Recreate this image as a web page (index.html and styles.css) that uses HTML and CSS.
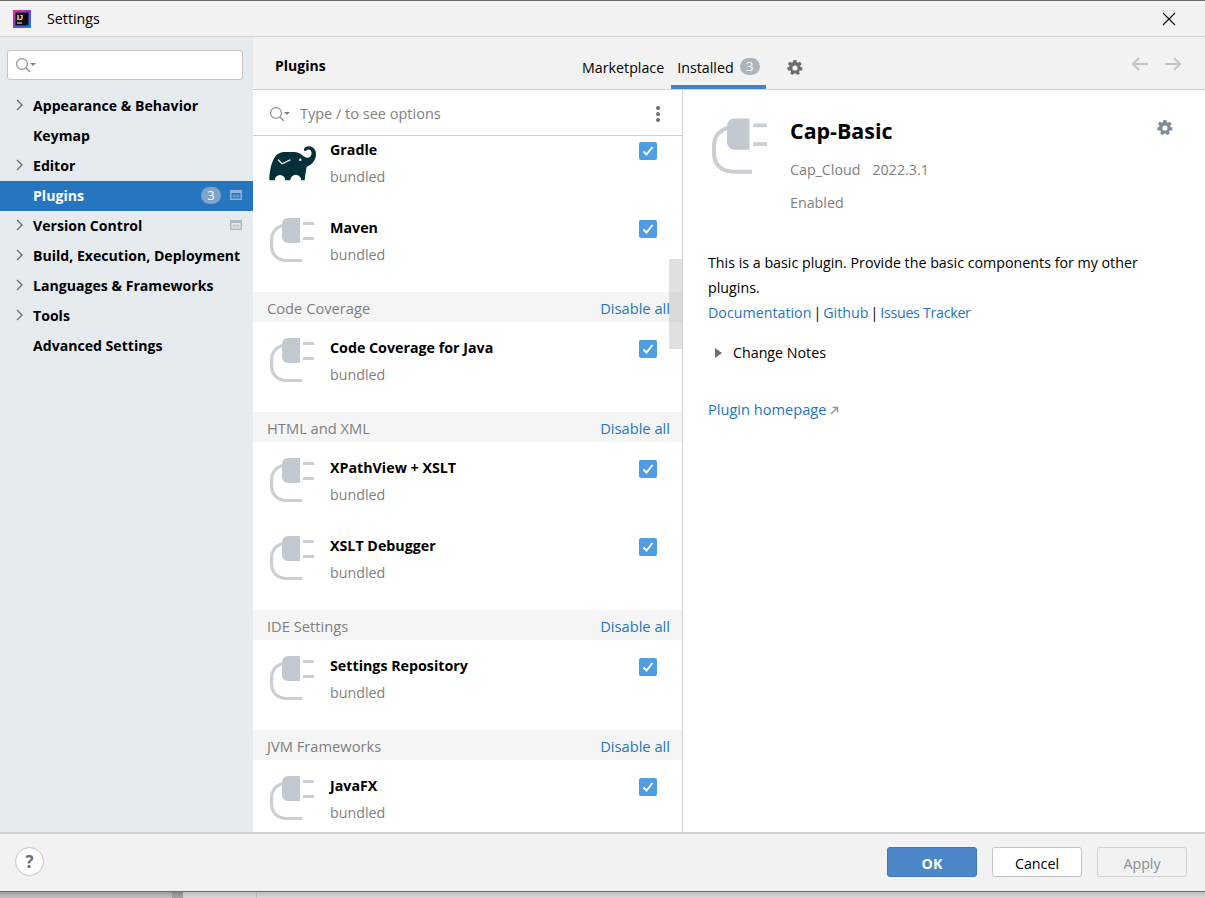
FILE: index.html
```html
<!DOCTYPE html>
<html lang="en">
<head>
  <meta charset="UTF-8">
  <title>Settings</title>
  <link rel="stylesheet" href="styles.css">
</head>
<body>
  <svg class="defs" width="0" height="0">
    <symbol id="plug" viewBox="0 0 48 48">
      <path d="M18 2h12v25H18a6 6 0 0 1-6-6V8a6 6 0 0 1 6-6z" fill="#c2c9d0"/>
      <path d="M33 6h11v3H33zM33 21h11v3H33z" fill="#c9cfd5"/>
      <path d="M12 9.500C5 12 1.600 17 1.600 24v6c0 9 6.400 14.500 15.400 14.500h15" fill="none" stroke="#c9cfd5" stroke-width="3.200"/>
    </symbol>
    <symbol id="gear" viewBox="0 0 16 16">
      <path fill-rule="evenodd" d="M6.600 0h2.800l.4 2.200 1.200.6 2-1 1.700 2.200-1.500 1.600.3 1.300 2.100.8-.5 2.700-2.300.1-.8 1 .8 2.200-2.400 1.400-1.500-1.700H7.100l-1.500 1.700-2.400-1.400.8-2.200-.8-1-2.300-.1L0 7.700l2.100-.8.3-1.300L.9 4l1.700-2.200 2 1 1.200-.6zM8 5.400a2.600 2.600 0 1 0 0 5.200 2.600 2.600 0 0 0 0-5.200z"/>
    </symbol>
    <symbol id="search" viewBox="0 0 22 16">
      <circle cx="7" cy="7" r="5.400" fill="none" stroke="#8b9298" stroke-width="1.200"/>
      <path d="M11 11l4 4" stroke="#8b9298" stroke-width="1.400"/>
      <path d="M15 6h6l-3 3z" fill="#7b8288"/>
    </symbol>
    <symbol id="page" viewBox="0 0 12 10">
      <path fill-rule="evenodd" d="M0 0h12v10H0zM1.500 3v5.500h9V3z" fill="currentColor"/>
      <path d="M2.500 4.500h7v3h-7z" fill="currentColor" opacity=".55"/>
    </symbol>
    <symbol id="chev" viewBox="0 0 8 12">
      <path d="M1 1l5 5-5 5" fill="none" stroke="#6e6e6e" stroke-width="1.300"/>
    </symbol>
    <symbol id="tick" viewBox="0 0 12 10">
      <path d="M1.500 5.500l3 3 6-7.500" fill="none" stroke="#fff" stroke-width="2"/>
    </symbol>
  </svg>

  <div class="dialog">
    <header class="titlebar">
      <svg class="logo" width="18" height="18" viewBox="0 0 18 18">
        <defs>
          <linearGradient id="ij" x1="0" y1="0" x2="1" y2="1">
            <stop offset="0" stop-color="#fc2f7a"/>
            <stop offset=".5" stop-color="#7a3fe0"/>
            <stop offset="1" stop-color="#0a8fe8"/>
          </linearGradient>
        </defs>
        <rect width="18" height="18" fill="url(#ij)"/>
        <rect x="2.500" y="2.500" width="13" height="13" fill="#0d0d12"/>
        <text x="4" y="9.500" class="logo-text">IJ</text>
        <rect x="4" y="12.500" width="5" height="1" fill="#fff"/>
      </svg>
      <span class="title">Settings</span>
      <svg class="close" width="14" height="14" viewBox="0 0 14 14">
        <path d="M1 1l12 12M13 1L1 13" stroke="#111" stroke-width="1.100"/>
      </svg>
    </header>

    <div class="body">
      <nav class="sidebar">
        <div class="side-search"><svg width="22" height="16"><use href="#search"/></svg></div>
        <ul class="tree">
          <li><svg class="chev" width="8" height="12"><use href="#chev"/></svg>Appearance &amp; Behavior</li>
          <li>Keymap</li>
          <li><svg class="chev" width="8" height="12"><use href="#chev"/></svg>Editor</li>
          <li class="selected">Plugins<span class="badge side-badge">3</span><svg class="page page-light" width="12" height="10"><use href="#page"/></svg></li>
          <li><svg class="chev" width="8" height="12"><use href="#chev"/></svg>Version Control<svg class="page" width="12" height="10"><use href="#page"/></svg></li>
          <li><svg class="chev" width="8" height="12"><use href="#chev"/></svg>Build, Execution, Deployment</li>
          <li><svg class="chev" width="8" height="12"><use href="#chev"/></svg>Languages &amp; Frameworks</li>
          <li><svg class="chev" width="8" height="12"><use href="#chev"/></svg>Tools</li>
          <li>Advanced Settings</li>
        </ul>
      </nav>

      <main class="content">
        <div class="toolbar">
          <h2>Plugins</h2>
          <div class="tabs">
            <span class="tab">Marketplace</span>
            <span class="tab active">Installed<span class="badge">3</span></span>
            <svg class="tab-gear" width="16" height="16"><use href="#gear"/></svg>
          </div>
          <div class="arrows">
            <svg width="18" height="14" viewBox="0 0 18 14"><path d="M17 7H2M8 1L2 7l6 6" fill="none" stroke="#c4c4c4" stroke-width="2"/></svg>
            <svg width="18" height="14" viewBox="0 0 18 14"><path d="M1 7h15M10 1l6 6-6 6" fill="none" stroke="#c4c4c4" stroke-width="2"/></svg>
          </div>
        </div>

        <div class="panes">
          <section class="list-pane">
            <div class="list-search">
              <svg width="22" height="16"><use href="#search"/></svg>
              <span class="placeholder">Type / to see options</span>
              <span class="kebab"><i></i><i></i><i></i></span>
            </div>
            <div class="list">
              <div class="scrollbar"></div>
              <div class="plugins scrolled">
                <div class="plugin">
                  <svg class="icon" width="48" height="48" viewBox="0 0 48 48">
                    <path d="M34.700 42.300H31.300A5.500 5.500 0 0 0 20.300 42.300H15.300A5.300 5.300 0 0 0 4.700 42.300H-.7C-.7 33 1.500 24 5 19 7 15.500 11 14 15 14H24C29 14 32 17 35 19 38 21 41 19 41.500 16 42 13 40 11 38 11.500 36.500 12 36 13 35.200 13 33.500 13 33.500 10.500 35 9.500 38.500 7 44 8.500 45.500 13 47 18 45 24 40 27L36.500 29C36 33 35 38 34.700 42.300Z" fill="#02303a"/>
                    <path d="M8 21.700l4 4 8.300-3.800" fill="none" stroke="#fff" stroke-width="1.200"/>
                    <circle cx="30.300" cy="21.700" r="1.200" fill="#fff"/>
                  </svg>
                  <div class="info"><b>Gradle</b><span>bundled</span></div>
                  <span class="check"><svg width="12" height="10"><use href="#tick"/></svg></span>
                </div>
                <div class="plugin">
                  <svg class="icon" width="48" height="48"><use href="#plug"/></svg>
                  <div class="info"><b>Maven</b><span>bundled</span></div>
                  <span class="check"><svg width="12" height="10"><use href="#tick"/></svg></span>
                </div>
              </div>

              <div class="group"><span>Code Coverage</span><a>Disable all</a></div>
              <div class="plugins">
                <div class="plugin">
                  <svg class="icon" width="48" height="48"><use href="#plug"/></svg>
                  <div class="info"><b>Code Coverage for Java</b><span>bundled</span></div>
                  <span class="check"><svg width="12" height="10"><use href="#tick"/></svg></span>
                </div>
              </div>

              <div class="group"><span>HTML and XML</span><a>Disable all</a></div>
              <div class="plugins">
                <div class="plugin">
                  <svg class="icon" width="48" height="48"><use href="#plug"/></svg>
                  <div class="info"><b>XPathView + XSLT</b><span>bundled</span></div>
                  <span class="check"><svg width="12" height="10"><use href="#tick"/></svg></span>
                </div>
                <div class="plugin">
                  <svg class="icon" width="48" height="48"><use href="#plug"/></svg>
                  <div class="info"><b>XSLT Debugger</b><span>bundled</span></div>
                  <span class="check"><svg width="12" height="10"><use href="#tick"/></svg></span>
                </div>
              </div>

              <div class="group"><span>IDE Settings</span><a>Disable all</a></div>
              <div class="plugins">
                <div class="plugin">
                  <svg class="icon" width="48" height="48"><use href="#plug"/></svg>
                  <div class="info"><b>Settings Repository</b><span>bundled</span></div>
                  <span class="check"><svg width="12" height="10"><use href="#tick"/></svg></span>
                </div>
              </div>

              <div class="group"><span>JVM Frameworks</span><a>Disable all</a></div>
              <div class="plugins">
                <div class="plugin">
                  <svg class="icon" width="48" height="48"><use href="#plug"/></svg>
                  <div class="info"><b>JavaFX</b><span>bundled</span></div>
                  <span class="check"><svg width="12" height="10"><use href="#tick"/></svg></span>
                </div>
              </div>
            </div>
          </section>

          <section class="detail">
            <div class="detail-head">
              <svg class="detail-icon" width="60" height="60"><use href="#plug"/></svg>
              <div class="detail-meta">
                <h1>Cap-Basic</h1>
                <p class="vendor"><span>Cap_Cloud</span><span>2022.3.1</span></p>
                <p class="state">Enabled</p>
              </div>
              <svg class="detail-gear" width="16" height="16"><use href="#gear"/></svg>
            </div>
            <p class="desc">This is a basic plugin. Provide the basic components for my other plugins.</p>
            <p class="links"><a>Documentation</a><span class="sep">|</span><a>Github</a><span class="sep">|</span><a>Issues Tracker</a></p>
            <p class="notes"><i class="tri"></i>Change Notes</p>
            <p class="home"><a>Plugin homepage</a>
              <svg width="9" height="9" viewBox="0 0 9 9"><path d="M1 8l6-6M2.500 1.500H7.500V6.500" fill="none" stroke="#8c9aa6" stroke-width="1.500"/></svg>
            </p>
          </section>
        </div>
      </main>
    </div>

    <footer class="footer">
      <span class="help">?</span>
      <div class="buttons">
        <button class="primary">OK</button>
        <button>Cancel</button>
        <button class="disabled">Apply</button>
      </div>
    </footer>
  </div>
  <div class="desktop"><i class="d1"></i><i class="d2"></i><i class="d3"></i></div>
</body>
</html>
```

FILE: styles.css
```css
* { box-sizing: border-box; margin: 0; padding: 0; }

html, body { height: 100%; }

body {
  font-family: "Open Sans", "Noto Sans", sans-serif;
  font-size: 14.25px;
  color: #000;
  background: #b9b9b9;
  display: flex;
  flex-direction: column;
  overflow: hidden;
}

.defs { position: absolute; }

.dialog {
  height: 892px;
  display: flex;
  flex-direction: column;
  background: #f2f2f2;
  border-top: 1px solid #6b6b6b;
  border-bottom: 1px solid #6b6b6b;
  flex: none;
}

.titlebar {
  height: 36px;
  display: flex;
  align-items: center;
  padding: 0 29px 0 13px;
  border-bottom: 1px solid #d1d1d1;
  flex: none;
}
.logo-text { font: bold 7px "Liberation Sans", sans-serif; fill: #fff; }
.title { margin-left: 16px; }
.close { margin-left: auto; }

.body { flex: 1; display: flex; min-height: 0; }

.sidebar {
  width: 253px;
  background: #e6ebf0;
  padding: 13px 0 0;
  flex: none;
}
.side-search {
  margin: 0 10px 0 7px;
  height: 30px;
  background: #fff;
  border: 1px solid #c4c4c4;
  border-radius: 3px;
  padding: 6px 0 0 7px;
  display: flex;
}
.tree { list-style: none; margin-top: 11px; }
.tree li {
  height: 30px;
  display: flex;
  align-items: center;
  padding: 0 0 2px 33px;
  font-weight: 700;
  font-size: 14.1px;
  position: relative;
}
.tree .chev { position: absolute; left: 16px; top: 8px; }
.tree .selected { background: #2675bf; color: #fff; }
.page { margin-left: auto; margin-right: 11px; color: #b1b9c0; }
.page-light { margin-left: 9px; color: #8eb4d9; }

.badge {
  width: 20px;
  height: 17px;
  border-radius: 9px;
  background: #abb5bc;
  color: #fff;
  font-size: 13px;
  font-weight: 400;
  display: inline-flex;
  align-items: center;
  justify-content: center;
  margin-left: 6px;
}
.side-badge { margin-left: auto; background: #7fa4c7; }

.content { flex: 1; display: flex; flex-direction: column; min-width: 0; background: #fff; }

.toolbar {
  height: 53px;
  background: #f2f2f2;
  border-bottom: 1px solid #d1d1d1;
  display: flex;
  position: relative;
  flex: none;
}
.toolbar h2 { font-size: 14px; font-weight: 700; width: 323px; padding: 19px 0 0 22px; }
.tabs { display: flex; align-items: flex-start; }
.tab { height: 52px; padding: 21px 6px 0; display: flex; align-items: flex-start; line-height: 19px; }
.tab.active { border-bottom: 4px solid #4083c9; width: 95px; margin-left: 1px; }
.tab-gear { margin: 23px 0 0 21px; fill: #6e6e6e; }
.arrows { margin-left: auto; padding: 20px 23px 0 0; display: flex; gap: 15px; }

.panes { flex: 1; display: flex; min-height: 0; }

.list-pane {
  width: 430px;
  border-right: 1px solid #d1d1d1;
  display: flex;
  flex-direction: column;
  flex: none;
}
.list-search {
  height: 46px;
  border-bottom: 1px solid #d1d1d1;
  display: flex;
  align-items: center;
  padding: 2px 22px 0 16px;
  flex: none;
}
.placeholder { margin-left: 9px; color: #7f7f7f; font-size: 14.5px; }
.kebab { margin-left: auto; display: flex; flex-direction: column; gap: 2px; }
.kebab i { width: 4px; height: 4px; border-radius: 50%; background: #6e6e6e; }

.list { flex: 1; overflow: hidden; position: relative; }
.scrollbar {
  position: absolute;
  right: 0;
  top: 123px;
  width: 13px;
  height: 90px;
  background: rgba(120, 120, 120, .22);
}

.plugins { padding-bottom: 12px; }
.plugins.scrolled { margin-top: -12px; }

.plugin {
  height: 78px;
  display: flex;
  align-items: flex-start;
  padding: 14px 25px 0 17px;
}
.plugin .icon { flex: none; overflow: visible; }
.info { margin: 2px 0 0 12px; display: flex; flex-direction: column; }
.info b { font-weight: 700; line-height: 19px; }
.info span { color: #7f7f7f; margin-top: 8px; line-height: 19px; }

.check {
  margin-left: auto;
  width: 18px;
  height: 18px;
  border-radius: 2px;
  background: #4f9ee3;
  display: flex;
  align-items: center;
  justify-content: center;
  margin-top: 4px;
}

.group {
  height: 30px;
  background: #f5f5f5;
  display: flex;
  align-items: center;
  justify-content: space-between;
  padding: 2px 12px 0 14px;
  color: #7f7f7f;
  font-size: 14.7px;
}
a { color: #2675bf; }

.detail { flex: 1; padding: 0 24px 0 25px; min-width: 0; }
.detail-head { display: flex; padding-top: 24px; height: 157px; position: relative; }
.detail-icon { flex: none; margin: 2px 0 0 4px; }
.detail-meta { margin-left: 18px; }
.detail-meta h1 { font-size: 21.4px; font-weight: 700; line-height: 27px; margin-top: 3px; }
.vendor { color: #7f7f7f; margin-top: 16px; line-height: 19px; display: flex; gap: 12px; }
.state { color: #7f7f7f; margin-top: 14px; line-height: 19px; }
.detail-gear { position: absolute; right: 8px; top: 30px; fill: #7f8b96; }

.desc { line-height: 25px; margin-top: 3px; }
.links { line-height: 25px; }
.links a:last-child { letter-spacing: -.3px; }
.sep { margin: 0 2px; }
.notes { margin-top: 15px; line-height: 25px; display: flex; align-items: center; }
.tri {
  width: 0;
  height: 0;
  border-left: 7px solid #6e6e6e;
  border-top: 5px solid transparent;
  border-bottom: 5px solid transparent;
  margin: 0 11px 0 7px;
}
.home { margin-top: 35px; line-height: 19px; font-size: 14.6px; }

.footer {
  height: 59px;
  border-top: 2px solid #d1d1d1;
  display: flex;
  align-items: center;
  padding: 0 18px 2px 15px;
  flex: none;
}
.help {
  width: 29px;
  height: 29px;
  border-radius: 50%;
  border: 1px solid #c4c4c4;
  background: #fff;
  color: #6e6e6e;
  font-weight: 700;
  font-size: 17px;
  display: flex;
  align-items: center;
  justify-content: center;
}
.buttons { margin-left: auto; display: flex; gap: 15px; }
.buttons button {
  width: 90px;
  height: 30px;
  padding-top: 3px;
  border: 1px solid #c4c4c4;
  border-radius: 3px;
  background: #fff;
  font: inherit;
  color: #000;
}
.buttons .primary { background: #4c87c8; border-color: #3f76b2; color: #fff; font-weight: 700; }
.buttons .disabled { background: #f2f2f2; border-color: #d1d1d1; color: #8c8c8c; }

.desktop {
  flex: 1;
  background: linear-gradient(#9e9e9e, #c5c5c5);
  position: relative;
}
.desktop i { position: absolute; top: 0; bottom: 0; }
.d1 { left: 172px; width: 11px; background: rgba(0, 0, 0, .15); }
.d2 { left: 256px; width: 1px; background: rgba(0, 0, 0, .2); }
.d3 { left: 183px; right: 0; background: rgba(255, 255, 255, .35); }
```
